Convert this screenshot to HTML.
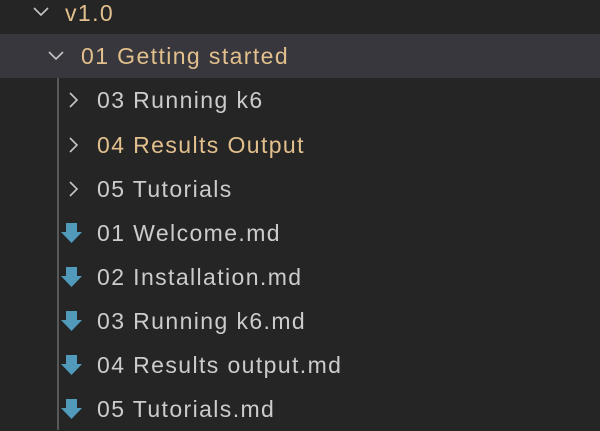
<!DOCTYPE html>
<html><head><style>
body{margin:0;width:600px;height:430px;background:#252526;overflow:hidden;font-family:"Liberation Sans",sans-serif;position:relative}
.r{position:absolute;left:0;width:600px;height:44px;line-height:44px;font-size:23px;letter-spacing:1.4px;color:#cccccc}
.y{color:#e2c08d}
.r span{position:absolute}
svg{position:absolute}
</style></head><body>
<div style="position:absolute;left:0;top:34px;width:600px;height:44px;background:#37373d"></div>
<div style="position:absolute;left:57px;top:78px;width:2px;height:352px;background:#585858"></div>

<div class="r y" style="top:-9px"><svg style="left:32px;top:15px" width="18" height="12" viewBox="0 0 18 12"><path d="M2 2 L9 9 L16 2" stroke="#c5c5c5" stroke-width="1.6" fill="none"/></svg><span style="left:65px">v1.0</span></div>
<div class="r y" style="top:34px"><svg style="left:47px;top:16px" width="18" height="12" viewBox="0 0 18 12"><path d="M2 2 L9 9 L16 2" stroke="#c5c5c5" stroke-width="1.6" fill="none"/></svg><span style="left:81px">01 Getting started</span></div>

<div class="r" style="top:78px"><svg style="left:67px;top:13px" width="12" height="18" viewBox="0 0 12 18"><path d="M3 2 L10 9 L3 16" stroke="#c5c5c5" stroke-width="1.6" fill="none"/></svg><span style="left:97px">03 Running k6</span></div>
<div class="r y" style="top:123px"><svg style="left:67px;top:13px" width="12" height="18" viewBox="0 0 12 18"><path d="M3 2 L10 9 L3 16" stroke="#c5c5c5" stroke-width="1.6" fill="none"/></svg><span style="left:97px">04 Results Output</span></div>
<div class="r" style="top:167px"><svg style="left:67px;top:13px" width="12" height="18" viewBox="0 0 12 18"><path d="M3 2 L10 9 L3 16" stroke="#c5c5c5" stroke-width="1.6" fill="none"/></svg><span style="left:97px">05 Tutorials</span></div>

<div class="r" style="top:211px"><svg style="left:61px;top:11px" width="22" height="22" viewBox="0 0 22 22"><path d="M5 1 H16 V10 H21 L10.5 21 L0 10 H5 Z" fill="#519aba"/></svg><span style="left:97px">01 Welcome.md</span></div>
<div class="r" style="top:255px"><svg style="left:61px;top:11px" width="22" height="22" viewBox="0 0 22 22"><path d="M5 1 H16 V10 H21 L10.5 21 L0 10 H5 Z" fill="#519aba"/></svg><span style="left:97px">02 Installation.md</span></div>
<div class="r" style="top:299px"><svg style="left:61px;top:11px" width="22" height="22" viewBox="0 0 22 22"><path d="M5 1 H16 V10 H21 L10.5 21 L0 10 H5 Z" fill="#519aba"/></svg><span style="left:97px">03 Running k6.md</span></div>
<div class="r" style="top:343px"><svg style="left:61px;top:11px" width="22" height="22" viewBox="0 0 22 22"><path d="M5 1 H16 V10 H21 L10.5 21 L0 10 H5 Z" fill="#519aba"/></svg><span style="left:97px">04 Results output.md</span></div>
<div class="r" style="top:387px"><svg style="left:61px;top:11px" width="22" height="22" viewBox="0 0 22 22"><path d="M5 1 H16 V10 H21 L10.5 21 L0 10 H5 Z" fill="#519aba"/></svg><span style="left:97px">05 Tutorials.md</span></div>
</body></html>
